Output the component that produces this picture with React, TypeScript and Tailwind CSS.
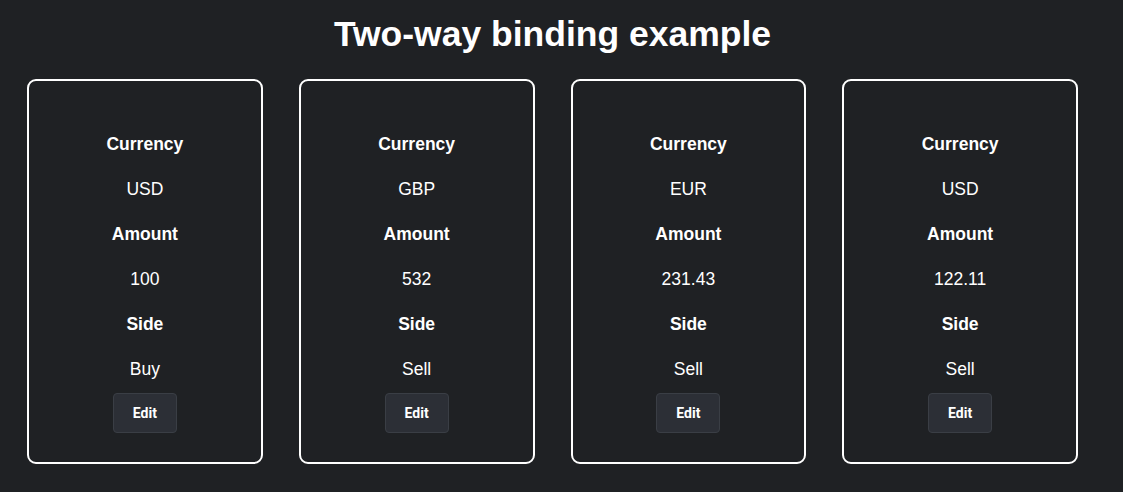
import React from "react";

const cards = [
  { currency: "USD", amount: "100", side: "Buy" },
  { currency: "GBP", amount: "532", side: "Sell" },
  { currency: "EUR", amount: "231.43", side: "Sell" },
  { currency: "USD", amount: "122.11", side: "Sell" },
];

function Row({ children, bold }: { children: React.ReactNode; bold?: boolean }) {
  return (
    <div className={`h-[45px] flex items-center justify-center text-[17.5px] ${bold ? "font-bold" : ""}`}>
      {children}
    </div>
  );
}

export default function App() {
  return (
    <div
      className="w-[1123px] h-[492px] bg-[#1f2124] text-white overflow-hidden"
      style={{ fontFamily: '"Liberation Sans", Arial, sans-serif' }}
    >
      <div className="ml-[27px] w-[1051px] flex flex-col">
        <h1 className="text-[35.5px] font-bold text-center leading-[40px] mt-[14px] h-[65px]">
          Two-way binding example
        </h1>
        <div className="flex gap-[36px]">
          {cards.map((c, i) => (
            <div
              key={i}
              className="w-[236px] h-[385px] border-2 border-white rounded-[9px] flex flex-col items-center pt-[41px]"
            >
              <Row bold>Currency</Row>
              <Row>{c.currency}</Row>
              <Row bold>Amount</Row>
              <Row>{c.amount}</Row>
              <Row bold>Side</Row>
              <Row>{c.side}</Row>
              <button
                className="mt-[1px] w-[64px] h-[40px] rounded-[4px] bg-[#2c2f36] border border-[#3a3e45] text-[14px] font-bold text-white"
                style={{ fontFamily: "Roboto, sans-serif" }}
              >
                Edit
              </button>
            </div>
          ))}
        </div>
      </div>
    </div>
  );
}
